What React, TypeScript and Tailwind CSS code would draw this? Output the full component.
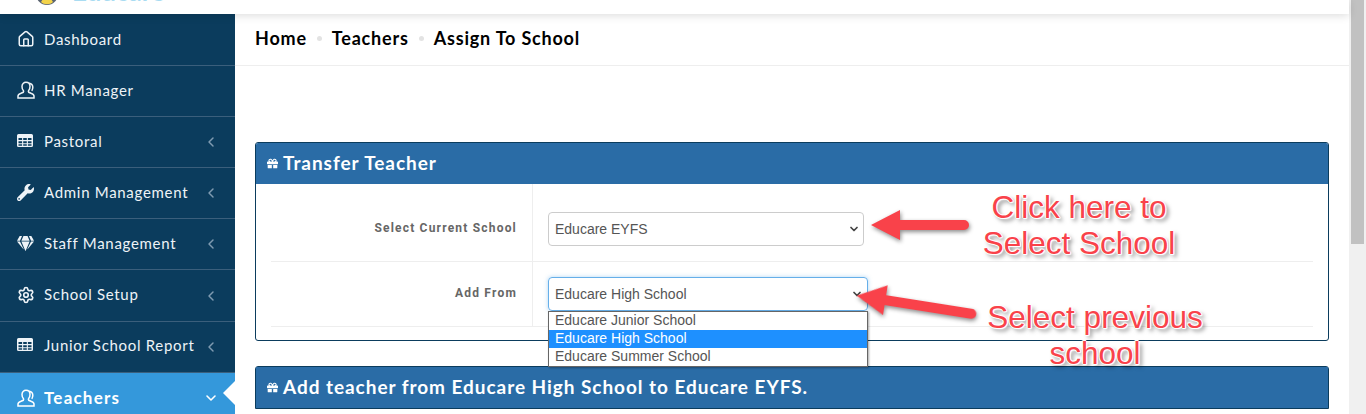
import { ChevronDown, ChevronLeft, Settings, Home } from "lucide-react";
import { FaGem, FaGift, FaWrench } from "react-icons/fa";
import type { ReactNode } from "react";

const raleway = "font-['Lato','Open_Sans',sans-serif]";

function Person() {
  return (
    <svg width="18" height="18" viewBox="0 0 18 18" fill="none" stroke="currentColor" strokeWidth="1.5">
      <path d="M1 17v-2c0-1.600 1.500-2.300 3-2.800l2.300-.9c.4-.5.4-1.100.1-1.700C5.300 8.300 5 6.900 5 5.400 5 3 6.700 1.300 9 1.300c2.400 0 4 1.700 4 4.100 0 1.500-.4 2.900-1.400 4.200-.3.600-.3 1.200.1 1.700l2.300.9c1.500.5 3 1.200 3 2.800v2H1Z" />
      <path d="M12 2.300c2 .3 3.800 1.700 3.800 4 0 1.400-.3 2.600-1 3.600" />
    </svg>
  );
}

function Grid() {
  return (
    <svg width="16" height="13" viewBox="0 0 16 13" fill="currentColor" className="-translate-y-[1px]">
      <path d="M1.500 0h13A1.500 1.500 0 0 1 16 1.500v10a1.500 1.500 0 0 1-1.500 1.500h-13A1.500 1.500 0 0 1 0 11.500v-10A1.500 1.500 0 0 1 1.500 0Z" />
      <path fill="#0b3c5d" d="M1.500 4h3.600v2H1.500zM6.200 4h3.600v2H6.200zM10.900 4h3.600v2h-3.600zM1.500 7.200h3.600v2H1.500zM6.200 7.200h3.600v2H6.200zM10.900 7.200h3.600v2h-3.600zM1.500 10.300h3.600v1.400H1.500zM6.200 10.300h3.600v1.400H6.200zM10.900 10.300h3.600v1.400h-3.600z" />
    </svg>
  );
}

function Item({ icon, label, arrow = true }: { icon: ReactNode; label: string; arrow?: boolean }) {
  return (
    <div className="flex h-[51.1px] shrink-0 items-center border-b border-[#3b5f7c] pb-[2px] pl-[17px] pr-[16px] text-[15px] tracking-[0.7px] text-[#eef3f7]">
      <span className="flex w-[27px] shrink-0 items-center">{icon}</span>
      <span className="flex-1 whitespace-nowrap">{label}</span>
      {arrow && <ChevronLeft size={16} strokeWidth={2.2} className="translate-y-[1px] text-[#7f9bb1]" />}
    </div>
  );
}

function Sidebar() {
  return (
    <aside className={`flex w-[235px] shrink-0 flex-col bg-[#0b3c5d] pt-px ${raleway}`}>
      <Item icon={<Home size={18} strokeWidth={2} />} label="Dashboard" arrow={false} />
      <Item icon={<Person />} label="HR Manager" arrow={false} />
      <Item icon={<Grid />} label="Pastoral" />
      <Item icon={<FaWrench size={17} />} label="Admin Management" />
      <Item icon={<FaGem size={17} />} label="Staff Management" />
      <Item icon={<Settings size={18} strokeWidth={2.2} />} label="School Setup" />
      <Item icon={<Grid />} label="Junior School Report" />
      <div className="relative flex h-[51px] shrink-0 items-center bg-[#3498db] pl-[17px] pr-[16px] text-[17px] font-bold tracking-[1.2px] text-white">
        <span className="flex w-[27px] shrink-0 items-center"><Person /></span>
        <span className="flex-1">Teachers</span>
        <ChevronDown size={16} strokeWidth={2.4} />
        <span className="absolute right-0 top-[8px] h-0 w-0 border-y-[12px] border-r-[12px] border-y-transparent border-r-white" />
      </div>
    </aside>
  );
}

function Dot() {
  return <span className="mx-[10px] h-[5px] w-[5px] rounded-full bg-[#e3e3e3]" />;
}

function PanelHead({ children }: { children: ReactNode }) {
  return (
    <div className={`flex h-[41px] items-center gap-[5px] bg-[#2a6ca6] pb-[1px] pl-[11px] text-[19px] font-bold tracking-[0.95px] text-white ${raleway}`}>
      <FaGift size={11} className="shrink-0" />
      <span className="whitespace-nowrap">{children}</span>
    </div>
  );
}

function Row({ label, children, pad, height }: { label: string; children: ReactNode; pad: string; height: string }) {
  return (
    <div className={`flex border-b border-[#eeeeee] ${height}`}>
      <div className={`w-[262px] shrink-0 border-r border-[#eeeeee] pr-[15px] text-right font-['Roboto',sans-serif] text-[12px] font-bold tracking-[1.2px] text-[#666666] ${pad}`}>
        {label}
      </div>
      <div className="flex-1 pl-[15px]">{children}</div>
    </div>
  );
}

function Annotation({ className, children }: { className: string; children: ReactNode }) {
  return (
    <div className={`absolute text-center font-['Liberation_Sans',sans-serif] text-[31.5px] leading-[36px] text-[#f9424a] [text-shadow:1px_0_0_#fff,-1px_0_0_#fff,0_1px_0_#fff,0_-1px_0_#fff,1px_1px_1px_#fff,-1px_-1px_1px_#fff,3px_3px_4px_rgba(0,0,0,0.5)] ${className}`}>
      {children}
    </div>
  );
}

function Arrow({ className, rotate, len }: { className: string; rotate: string; len: number }) {
  return (
    <svg width={len + 4} height="34" viewBox={`0 0 ${len + 4} 34`} className={`absolute drop-shadow-[1px_2px_2px_rgba(0,0,0,0.45)] ${rotate} ${className}`}>
      <path d={`M1 17 30 2V12H${len - 1}a5 5 0 0 1 0 10H30V32Z`} fill="#f9424a" />
    </svg>
  );
}

export default function App() {
  return (
    <div className="relative flex h-[414px] w-[1366px] overflow-hidden bg-white">
      <div className="flex min-w-0 flex-1 flex-col">
        <header className="relative z-10 h-[14px] shrink-0 overflow-hidden bg-white shadow-[0_2px_8px_rgba(0,0,0,0.13)]">
          <div className="flex items-start gap-[12px] pl-[34px]">
            <svg width="26" height="24" viewBox="0 0 26 24" className="-translate-y-[18px]">
              <circle cx="13" cy="12" r="11" fill="#5b6470" />
              <circle cx="13" cy="13" r="7" fill="#d9dfe5" />
              <path d="M7 20c3 3 9 3 12 0l-2-3H9Z" fill="#f3d34a" />
            </svg>
            <span className={`-translate-y-[21px] text-[26px] font-bold leading-[24px] text-[#a9dcf2] ${raleway}`}>Educare</span>
          </div>
        </header>
        <div className="flex min-h-0 flex-1">
          <Sidebar />
          <main className="min-w-0 flex-1">
            <div className={`flex h-[52px] items-center border-b border-[#eeeeee] pb-[2px] pl-[20px] text-[18px] font-bold tracking-[0.8px] text-black ${raleway}`}>
              <span>Home</span>
              <Dot />
              <span>Teachers</span>
              <Dot />
              <span>Assign To School</span>
            </div>
            <div className="px-[20px] pt-[76px]">
              <section className="h-[199px] overflow-hidden rounded-[3px] border border-[#0b3c5d]">
                <PanelHead>Transfer Teacher</PanelHead>
                <div className="px-[15px]">
                  <Row label="Select Current School" pad="pt-[35px]" height="h-[78px]">
                    <div className="pt-[28px]">
                      <div className="flex h-[34px] w-[316px] items-center justify-between rounded-[4px] border border-[#cccccc] pl-[6px] pr-[3px] font-['Liberation_Sans',sans-serif] text-[14px] text-[#555555]">
                        <span>Educare EYFS</span>
                        <ChevronDown size={12} strokeWidth={3.5} className="text-[#444444]" />
                      </div>
                    </div>
                  </Row>
                  <Row label="Add From" pad="pt-[22px]" height="h-[65px]">
                    <div className="pt-[15px]">
                      <div className="flex h-[34px] w-[320px] items-center justify-between rounded-[4px] border border-[#66afe9] pl-[6px] pr-[4px] font-['Liberation_Sans',sans-serif] text-[14px] text-[#555555] shadow-[0_0_4px_rgba(102,175,233,0.5)]">
                        <span>Educare High School</span>
                        <ChevronDown size={12} strokeWidth={3.5} className="text-[#444444]" />
                      </div>
                    </div>
                  </Row>
                </div>
              </section>
              <section className="mt-[25px] rounded-t-[3px] border border-[#0b3c5d]">
                <PanelHead>Add teacher from Educare High School to Educare EYFS.</PanelHead>
              </section>
            </div>
          </main>
        </div>
      </div>
      <div className="w-[17px] shrink-0 bg-[#f0f0f0] px-[2px]">
        <div className="h-[244px] w-[13px] bg-[#c1c1c1]" />
      </div>

      <div className="absolute left-[548px] top-[311px] w-[320px] border border-[#666666] bg-white font-['Liberation_Sans',sans-serif] text-[14px] leading-[17px] text-[#555555] shadow-[1px_1px_2px_rgba(0,0,0,0.35)]">
        <div className="h-[18px] pl-[6px]">Educare Junior School</div>
        <div className="h-[18px] bg-[#1e90ff] pl-[6px] text-white">Educare High School</div>
        <div className="h-[18px] pl-[6px]">Educare Summer School</div>
      </div>

      <Arrow className="left-[870px] top-[208px]" rotate="" len={95} />
      <Arrow className="left-[855px] top-[288px]" rotate="rotate-[9deg]" len={118} />
      <Annotation className="left-[969px] top-[189px] w-[220px]">Click here to<br />Select School</Annotation>
      <Annotation className="left-[975px] top-[299px] w-[240px]">Select previous<br />school</Annotation>
    </div>
  );
}
